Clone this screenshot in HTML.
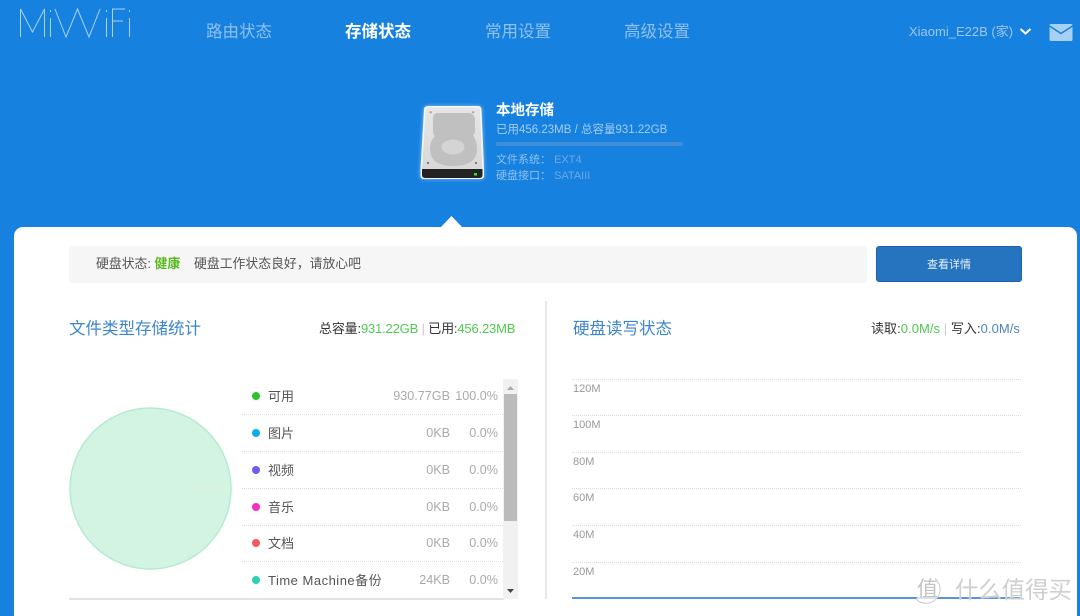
<!DOCTYPE html>
<html lang="zh"><head><meta charset="utf-8"><title>MiWiFi</title>
<style>
html,body{margin:0;padding:0;width:1080px;height:616px;overflow:hidden}
#p{width:1080px;height:616px;overflow:hidden;position:relative;background:#1781e0;font-family:"Liberation Sans","Noto Sans CJK SC",sans-serif;color:#444}
.a{position:absolute;white-space:nowrap;line-height:1}
.nav{top:24px;font-size:16.5px;color:#8fc0ee}
.g{color:#4fc94f}
.row{position:absolute;left:242px;width:262px;height:37px;box-sizing:border-box}
.row:after{content:"";position:absolute;left:0;right:0;bottom:0;height:1px;background:repeating-linear-gradient(90deg,#dcdcdc 0 1px,transparent 1px 2px)}
.row.l:after{display:none}
.dot{position:absolute;left:10px;top:14px;width:8px;height:8px;border-radius:50%}
.nm{position:absolute;left:26px;top:12px;font-size:13px;line-height:1;color:#555;white-space:nowrap}
.sz{position:absolute;right:54px;top:12px;font-size:12.6px;line-height:1;color:#aaa;white-space:nowrap}
.pc{position:absolute;right:6px;top:12px;font-size:12.6px;line-height:1;color:#aaa;white-space:nowrap}
.gl{position:absolute;left:572px;width:449px;height:1px;background:repeating-linear-gradient(90deg,#dcdcdc 0 1px,transparent 1px 2px)}
.yl{position:absolute;left:573px;font-size:11px;line-height:1;color:#999}
</style></head><body><div id="p">

<svg class="a" style="left:18px;top:6px" width="116" height="34" viewBox="0 0 116 34">
<g fill="none" stroke="#a9d2f5" stroke-width="1">
<path d="M2.500 31V3L14.500 26 26.500 3V31"/>
<path d="M32.500 12V31M32.500 4V6"/>
<path d="M37 3L48 31 59.500 3 71 31 82 3"/>
<path d="M88.500 12V31M88.500 4V6"/>
<path d="M94.500 31V3H107M94.500 15H105"/>
<path d="M111.500 12V31M111.500 4V6"/>
</g></svg>

<div class="a nav" style="left:206px">路由状态</div>
<div class="a nav" style="left:345px;color:#fff;font-weight:bold">存储状态</div>
<div class="a nav" style="left:485px">常用设置</div>
<div class="a nav" style="left:624px">高级设置</div>

<div class="a" style="left:909px;top:25px;font-size:13px;color:#9cc6ec">Xiaomi_E22B (家)</div>
<svg class="a" style="left:1019px;top:27px" width="13" height="9" viewBox="0 0 13 9"><path d="M1.500 2L6.500 6.500 11.500 2" fill="none" stroke="#fff" stroke-width="2"/></svg>
<svg class="a" style="left:1049px;top:24px" width="24" height="18" viewBox="0 0 24 18"><rect width="23" height="17" x=".5" rx="1.500" fill="#a6d0f4"/><path d="M0.500 2L12 9.500 23.500 2" fill="none" stroke="#1781e0" stroke-width="1.500"/></svg>

<svg class="a" style="left:418px;top:103px;filter:drop-shadow(0 0 2px rgba(255,255,255,.5))" width="68" height="80" viewBox="0 0 68 80">
<defs><linearGradient id="d" x1="0" y1="0" x2="0" y2="1"><stop offset="0" stop-color="#e6e6e6"/><stop offset="1" stop-color="#d8d8d8"/></linearGradient></defs>
<path d="M10 3H60Q63 3 63.500 6L66 66V73Q66 76 62 76H6Q2.500 76 2.500 73V66L6 6Q6.500 3 10 3Z" fill="#f4f8fc"/>
<path d="M10.500 4.500H59.500Q61.500 4.500 62 7L64.500 66H4L7.500 7Q8 4.500 10.500 4.500Z" fill="url(#d)"/>
<path d="M4 66H64.500V72Q64.500 75 61 75H7.500Q4 75 4 72Z" fill="#222"/>
<path d="M20 10H50Q57 10 57 18V28Q57 31 55 32Q59 38 59 46Q59 63 35 63Q12 63 12 46Q12 38 17 33Q15 31 15 28V16Q15 10 20 10Z" fill="#c0c0c0"/>
<ellipse cx="35" cy="44" rx="11.500" ry="7.500" fill="#d4d4d4"/>
<circle cx="12.700" cy="9.300" r="1.200" fill="#aaa"/><circle cx="55" cy="9.300" r="1.200" fill="#aaa"/>
<circle cx="10" cy="60" r="1.200" fill="#808080"/><circle cx="58" cy="60" r="1.200" fill="#808080"/>
<rect x="56" y="70" width="3" height="2.500" fill="#3fdc3f"/>
</svg>

<div class="a" style="left:496px;top:104px;font-size:14.500px;font-weight:bold;color:#fff">本地存储</div>
<div class="a" style="left:496px;top:125px;font-size:11.500px;color:#a3cdf3">已用456.23MB / 总容量931.22GB</div>
<div class="a" style="left:496px;top:142px;width:187px;height:4px;background:#3f8edc;border-radius:2px"></div>
<div class="a" style="left:496px;top:155px;font-size:11px;color:#8fc0ee">文件系统： <span style="color:#6ba9e6">EXT4</span></div>
<div class="a" style="left:496px;top:171px;font-size:11px;color:#8fc0ee">硬盘接口： <span style="color:#6ba9e6">SATAIII</span></div>

<div class="a" style="left:14px;top:227px;width:1063px;height:400px;background:#fff;border-radius:9px"></div>
<svg class="a" style="left:440px;top:216px" width="23" height="12"><path d="M0 12L11.500 0 23 12Z" fill="#fff"/></svg>

<div class="a" style="left:69px;top:246px;width:798px;height:37px;background:#f6f6f6;border-radius:4px"></div>
<div class="a" style="left:96px;top:258px;font-size:12.850px;color:#555">硬盘状态: <span style="color:#58b81c;font-weight:bold">健康</span></div>
<div class="a" style="left:194px;top:258px;font-size:12.850px;color:#555">硬盘工作状态良好，请放心吧</div>
<div class="a" style="left:876px;top:246px;width:146px;height:36px;box-sizing:border-box;background:#2673c0;border:1px solid #1a64ae;border-radius:3px;color:#e8f2fb;font-size:11px;line-height:37px;text-align:center">查看详情</div>

<div class="a" style="left:69px;top:321px;font-size:16.500px;color:#3d86cc">文件类型存储统计</div>
<div class="a" style="left:319px;top:322px;font-size:13px;letter-spacing:-.17px;color:#333">总容量:<span class="g">931.22GB</span> <span style="color:#ccc">|</span> 已用:<span class="g">456.23MB</span></div>

<div class="a" style="left:545px;top:301px;width:2px;height:298px;background:#e8e8e8"></div>

<div class="a" style="left:573px;top:321px;font-size:16.500px;color:#3d86cc">硬盘读写状态</div>
<div class="a" style="left:871px;top:322px;font-size:13px;letter-spacing:.05px;color:#333">读取:<span class="g">0.0M/s</span> <span style="color:#ccc">|</span> 写入:<span style="color:#4a85c4">0.0M/s</span></div>

<svg class="a" style="left:69px;top:407px" width="163" height="163" viewBox="0 0 163 163"><circle cx="81.500" cy="81.500" r="80.500" fill="#d3f3e3" stroke="#b6ebd0" stroke-width="1.500"/><path d="M112 81.500H161" stroke="#e2efd4" stroke-width="1"/></svg>

<div class="row" style="top:378px"><i class="dot" style="background:#2ec22e"></i><span class="nm">可用</span><span class="sz">930.77GB</span><span class="pc">100.0%</span></div>
<div class="row" style="top:415px"><i class="dot" style="background:#0daee6"></i><span class="nm">图片</span><span class="sz">0KB</span><span class="pc">0.0%</span></div>
<div class="row" style="top:452px"><i class="dot" style="background:#6a5cf5"></i><span class="nm">视频</span><span class="sz">0KB</span><span class="pc">0.0%</span></div>
<div class="row" style="top:488.500px"><i class="dot" style="background:#f52fc0"></i><span class="nm">音乐</span><span class="sz">0KB</span><span class="pc">0.0%</span></div>
<div class="row" style="top:525px"><i class="dot" style="background:#f65a5a"></i><span class="nm">文档</span><span class="sz">0KB</span><span class="pc">0.0%</span></div>
<div class="row l" style="top:562px"><i class="dot" style="background:#2ccfb6"></i><span class="nm" style="letter-spacing:.5px">Time Machine备份</span><span class="sz">24KB</span><span class="pc">0.0%</span></div>

<div class="a" style="left:69px;top:598px;width:435px;height:2px;background:#e3e3e3"></div>

<div class="a" style="left:503px;top:379px;width:15px;height:220px;background:#f1f1f1"></div>
<div class="a" style="left:504px;top:394px;width:13px;height:127px;background:#bbb"></div>
<svg class="a" style="left:503px;top:379px" width="15" height="220"><path d="M4 11L7.500 7 11 11Z" fill="#aaa"/><path d="M4 210H11L7.500 214Z" fill="#444"/></svg>

<div class="gl" style="top:379px"></div><div class="yl" style="top:384px">120M</div>
<div class="gl" style="top:415px"></div><div class="yl" style="top:420px">100M</div>
<div class="gl" style="top:452px"></div><div class="yl" style="top:457px">80M</div>
<div class="gl" style="top:488px"></div><div class="yl" style="top:493px">60M</div>
<div class="gl" style="top:525px"></div><div class="yl" style="top:530px">40M</div>
<div class="gl" style="top:562px"></div><div class="yl" style="top:567px">20M</div>
<div class="a" style="left:572px;top:597px;width:448px;height:2px;background:#5b94d6"></div>

<svg class="a" style="left:912px;top:575px" width="32" height="32"><path d="M23 3.500A14 14 0 1 1 4 24" fill="rgba(255,255,255,.75)" stroke="#ccc" stroke-width="1"/></svg>
<div class="a" style="left:917px;top:579px;font-size:21px;color:#c4c4c4;text-shadow:0 0 1px #fff">值</div>
<div class="a" style="left:955px;top:579px;font-size:23.4px;color:#cfcfcf;text-shadow:0 0 1px #fff">什么值得买</div>

</div></body></html>
